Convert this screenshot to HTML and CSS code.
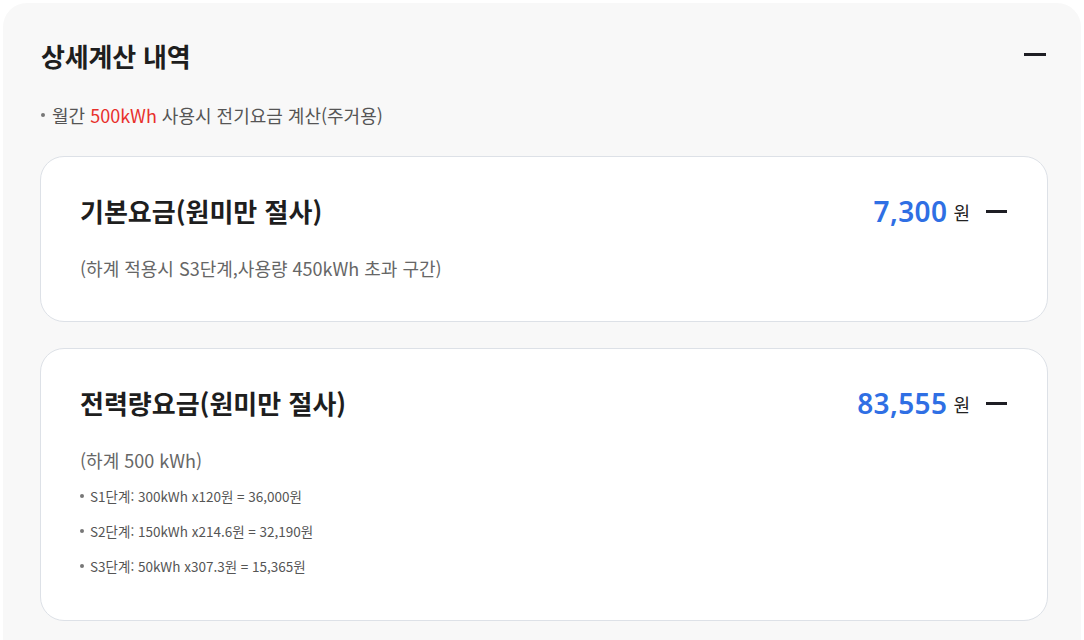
FILE: index.html
```html
<!DOCTYPE html>
<html lang="ko">
<head>
<meta charset="utf-8">
<link rel="stylesheet" href="styles.css">
</head>
<body>
<div class="panel">
  <div class="panel-head">
    <h2 class="panel-title">상세계산 내역</h2>
    <span class="minus"></span>
  </div>
  <p class="note"><span class="dot"></span>월간&nbsp;<em class="red">500kWh</em>&nbsp;사용시 전기요금 계산(주거용)</p>

  <div class="card card-1">
    <div class="card-head">
      <h3 class="card-title">기본요금(원미만 절사)</h3>
      <div class="price"><span class="amount">7,300</span><span class="won">원</span><span class="minus small"></span></div>
    </div>
    <p class="card-sub">(하계 적용시 S3단계,사용량 450kWh 초과 구간)</p>
  </div>

  <div class="card card-2">
    <div class="card-head">
      <h3 class="card-title">전력량요금(원미만 절사)</h3>
      <div class="price"><span class="amount">83,555</span><span class="won">원</span><span class="minus small"></span></div>
    </div>
    <p class="card-sub">(하계 500 kWh)</p>
    <ul class="steps">
      <li>S1단계: 300kWh x120원 = 36,000원</li>
      <li>S2단계: 150kWh x214.6원 = 32,190원</li>
      <li>S3단계: 50kWh x307.3원 = 15,365원</li>
    </ul>
  </div>
</div>
</body>
</html>
```

FILE: styles.css
```css
* { box-sizing: border-box; }
html, body { margin: 0; padding: 0; background: #ffffff; }
body {
  font-family: "Noto Sans CJK KR", "Noto Sans", sans-serif;
  color: #222;
  height: 640px;
  overflow: hidden;
}
.panel {
  margin: 3px 0 0 3px;
  width: 1078px;
  min-height: 700px;
  background: #f8f8f8;
  border-radius: 24px 24px 0 0;
  padding: 35px 33px 0 37px;
}
.panel-head {
  display: flex;
  align-items: center;
  justify-content: space-between;
  padding-left: 1px;
  padding-right: 2px;
}
.panel-title {
  margin: 0;
  font-size: 26px;
  line-height: 36px;
  font-weight: 700;
  color: #1e1e1e;
  letter-spacing: -0.2px;
}
.minus {
  display: block;
  width: 22px;
  height: 3px;
  background: #1e1e24;
  margin-top: -3px;
}
.minus.small {
  width: 21px;
  margin-top: 0;
  margin-left: 16px;
}
.note {
  margin: 28px 0 0 0;
  font-size: 18px;
  line-height: 26px;
  color: #555;
  display: flex;
  align-items: center;
  padding-left: 1px;
}
.dot {
  width: 4px;
  height: 4px;
  border-radius: 50%;
  background: #777;
  margin-right: 7px;
}
.red { font-style: normal; color: #e8302c; }
.card {
  margin-top: 28px;
  background: #fff;
  border: 1px solid #dde1e7;
  border-radius: 24px;
  padding: 36px 40px 40px 39px;
}
.card-2 { margin-top: 26px; padding-bottom: 44px; }
.card-head {
  display: flex;
  align-items: center;
  justify-content: space-between;
  height: 36px;
}
.card-title {
  margin: 0;
  font-size: 26px;
  line-height: 36px;
  font-weight: 700;
  color: #1e1e1e;
}
.price {
  display: flex;
  align-items: center;
}
.amount {
  font-family: "Noto Sans", "Noto Sans CJK KR", sans-serif;
  font-size: 28px;
  font-weight: 600;
  color: #2f6fe4;
  line-height: 36px;
  letter-spacing: 0.4px;
}
.won {
  font-size: 18px;
  margin-left: 6px;
  color: #222;
  line-height: 36px;
  padding-top: 2px;
}
.card-sub {
  margin: 26px 0 0 0;
  font-size: 18px;
  line-height: 26px;
  color: #666;
}
.steps {
  list-style: none;
  margin: 13px 0 0 0;
  padding: 0;
}
.steps li {
  font-size: 13.5px;
  line-height: 20px;
  color: #555;
  display: flex;
  align-items: center;
  margin-bottom: 15px;
}
.steps li:last-child { margin-bottom: 0; }
.steps li::before {
  content: "";
  width: 4px;
  height: 4px;
  border-radius: 50%;
  background: #777;
  margin-right: 6px;
}
```
